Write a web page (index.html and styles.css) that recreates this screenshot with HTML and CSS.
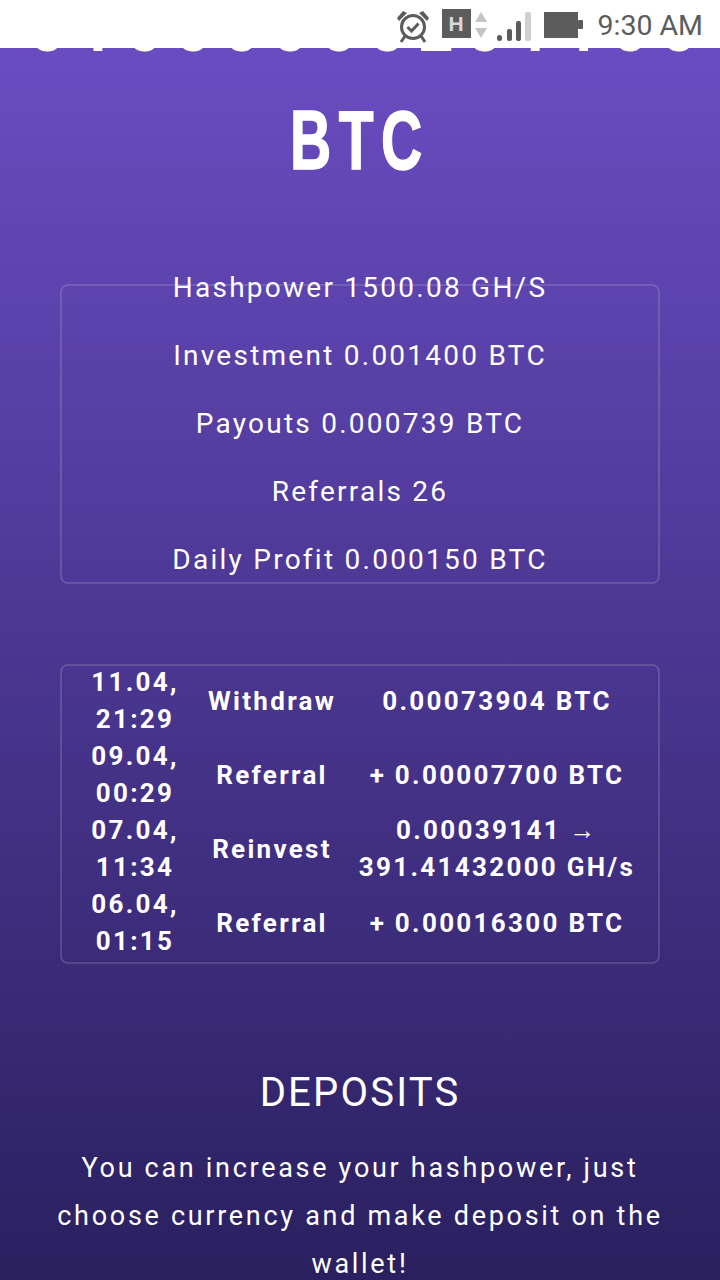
FILE: index.html
```html
<!DOCTYPE html>
<html lang="en">
<head>
    <meta charset="UTF-8">
    <meta name="viewport" content="width=device-width, initial-scale=1.0">
    <title>Hashpower</title>
    <link rel="stylesheet" href="styles.css">
</head>
<body>
    <div class="status-bar">
        <svg class="icon-alarm" width="34" height="34" viewBox="0 0 34 34">
            <circle cx="17" cy="18" r="11.5" fill="none" stroke="#5c5c5c" stroke-width="3"/>
            <path d="M11.5 18l4 4 7-7.5" fill="none" stroke="#5c5c5c" stroke-width="3"/>
            <path d="M1 9l6-7 4 2-8 8zM33 9l-6-7-4 2 8 8z" fill="#5c5c5c"/>
            <path d="M9 27l-4 6M25 27l4 6" stroke="#5c5c5c" stroke-width="3"/>
        </svg>
        <div class="net-box">H</div>
        <svg class="icon-arrows" width="12" height="26" viewBox="0 0 12 26">
            <path d="M6 0l6 10H0z" fill="#c4c4c4"/>
            <path d="M6 26l6-10H0z" fill="#c4c4c4"/>
        </svg>
        <svg class="icon-signal" width="34" height="30" viewBox="0 0 34 30">
            <rect x="0" y="23" width="5" height="6" rx="2.5" fill="#5c5c5c"/>
            <rect x="10" y="17" width="5" height="12" rx="2" fill="#5c5c5c"/>
            <rect x="19" y="9" width="5" height="20" rx="2" fill="#5c5c5c"/>
            <rect x="28" y="0" width="6" height="29" rx="2" fill="#d0d0d0"/>
        </svg>
        <svg class="icon-battery" width="39" height="26" viewBox="0 0 39 26">
            <rect x="0" y="0" width="34" height="26" fill="#5c5c5c"/>
            <rect x="34" y="8" width="5" height="9" rx="1" fill="#5c5c5c"/>
        </svg>
        <span class="clock">9:30 AM</span>
    </div>

    <main class="page">
        <div class="balance">
            <p class="balance-value">01000000201100</p>
            <p class="balance-unit"><span>BTC</span></p>
        </div>

        <section class="panel stats">
            <p>Hashpower 1500.08 GH/S</p>
            <p>Investment 0.001400 BTC</p>
            <p>Payouts 0.000739 BTC</p>
            <p>Referrals 26</p>
            <p>Daily Profit 0.000150 BTC</p>
        </section>

        <section class="panel history">
            <div class="history-row">
                <span>11.04, 21:29</span>
                <span>Withdraw</span>
                <span>0.00073904 BTC</span>
            </div>
            <div class="history-row">
                <span>09.04, 00:29</span>
                <span>Referral</span>
                <span>+ 0.00007700 BTC</span>
            </div>
            <div class="history-row">
                <span>07.04, 11:34</span>
                <span>Reinvest</span>
                <span>0.00039141 → 391.41432000 GH/s</span>
            </div>
            <div class="history-row">
                <span>06.04, 01:15</span>
                <span>Referral</span>
                <span>+ 0.00016300 BTC</span>
            </div>
        </section>

        <section class="deposits">
            <h2>DEPOSITS</h2>
            <p>You can increase your hashpower, just choose currency and make deposit on the wallet!</p>
        </section>
    </main>
</body>
</html>
```

FILE: styles.css
```css
html, body {
    height: 100%;
}

body {
    margin: 0;
    overflow: hidden;
    background: #fff;
    color: #fff;
    font-family: Roboto, sans-serif;
}

p, h2 {
    margin: 0;
}

.status-bar {
    height: 48px;
    box-sizing: border-box;
    padding: 9px 17px 0 0;
    display: flex;
    justify-content: flex-end;
    align-items: flex-start;
    background: #fff;
    color: #5c5c5c;
}

.icon-alarm {
    margin-right: 12px;
}

.net-box {
    width: 29px;
    height: 29px;
    margin-right: 4px;
    background: #5c5c5c;
    color: #d8d8d8;
    font: bold 21px/29px "Liberation Sans", sans-serif;
    text-align: center;
}

.icon-arrows {
    margin: 3px 10px 0 0;
}

.icon-signal {
    margin: 3px 13px 0 0;
}

.icon-battery {
    margin: 3px 15px 0 0;
}

.clock {
    font: 28.5px/34px Roboto, sans-serif;
}

.page {
    height: 1232px;
    overflow: hidden;
    background: linear-gradient(180deg, #6a4cc1 0%, #2a205f 100%);
}

.balance {
    text-align: center;
    font-weight: bold;
}

.balance-value {
    margin-top: -49px;
    padding-left: 19px;
    font-size: 62px;
    line-height: 62px;
    letter-spacing: 13px;
    white-space: nowrap;
}

.balance-unit {
    margin-top: 36px;
    font-family: "Liberation Sans", sans-serif;
    font-size: 84px;
    line-height: 86px;
    letter-spacing: 11px;
}

/* no condensed face installed, so squeeze the bold one */
.balance-unit span {
    display: inline-block;
    transform: scaleX(0.68);
    -webkit-text-stroke: 1.5px #fff;
}

.panel {
    width: 600px;
    box-sizing: border-box;
    margin: 0 auto;
    border: 2px solid rgba(255, 255, 255, 0.14);
    border-radius: 8px;
}

.stats {
    height: 300px;
    margin-top: 101px;
    text-align: center;
    font-size: 28px;
    letter-spacing: 2.25px;
    line-height: 36px;
}

.stats p {
    margin-top: 32px;
}

.stats p:first-child {
    margin-top: -16px;
}

.history {
    height: 300px;
    margin-top: 80px;
    font-weight: 700;
    font-size: 26px;
    letter-spacing: 2.3px;
    line-height: 37px;
    text-align: center;
}

.history-row {
    display: grid;
    grid-template-columns: 146px 128px 1fr;
    align-items: center;
    height: 74px;
}

.history-row:first-child {
    margin-top: -2px;
}

.deposits {
    margin-top: 105px;
    text-align: center;
}

.deposits h2 {
    font-size: 40px;
    font-weight: 400;
    line-height: 48px;
    letter-spacing: 2.2px;
}

.deposits p {
    width: 630px;
    margin: 27px auto 0;
    font-size: 27px;
    line-height: 48px;
    letter-spacing: 2.7px;
}
```
